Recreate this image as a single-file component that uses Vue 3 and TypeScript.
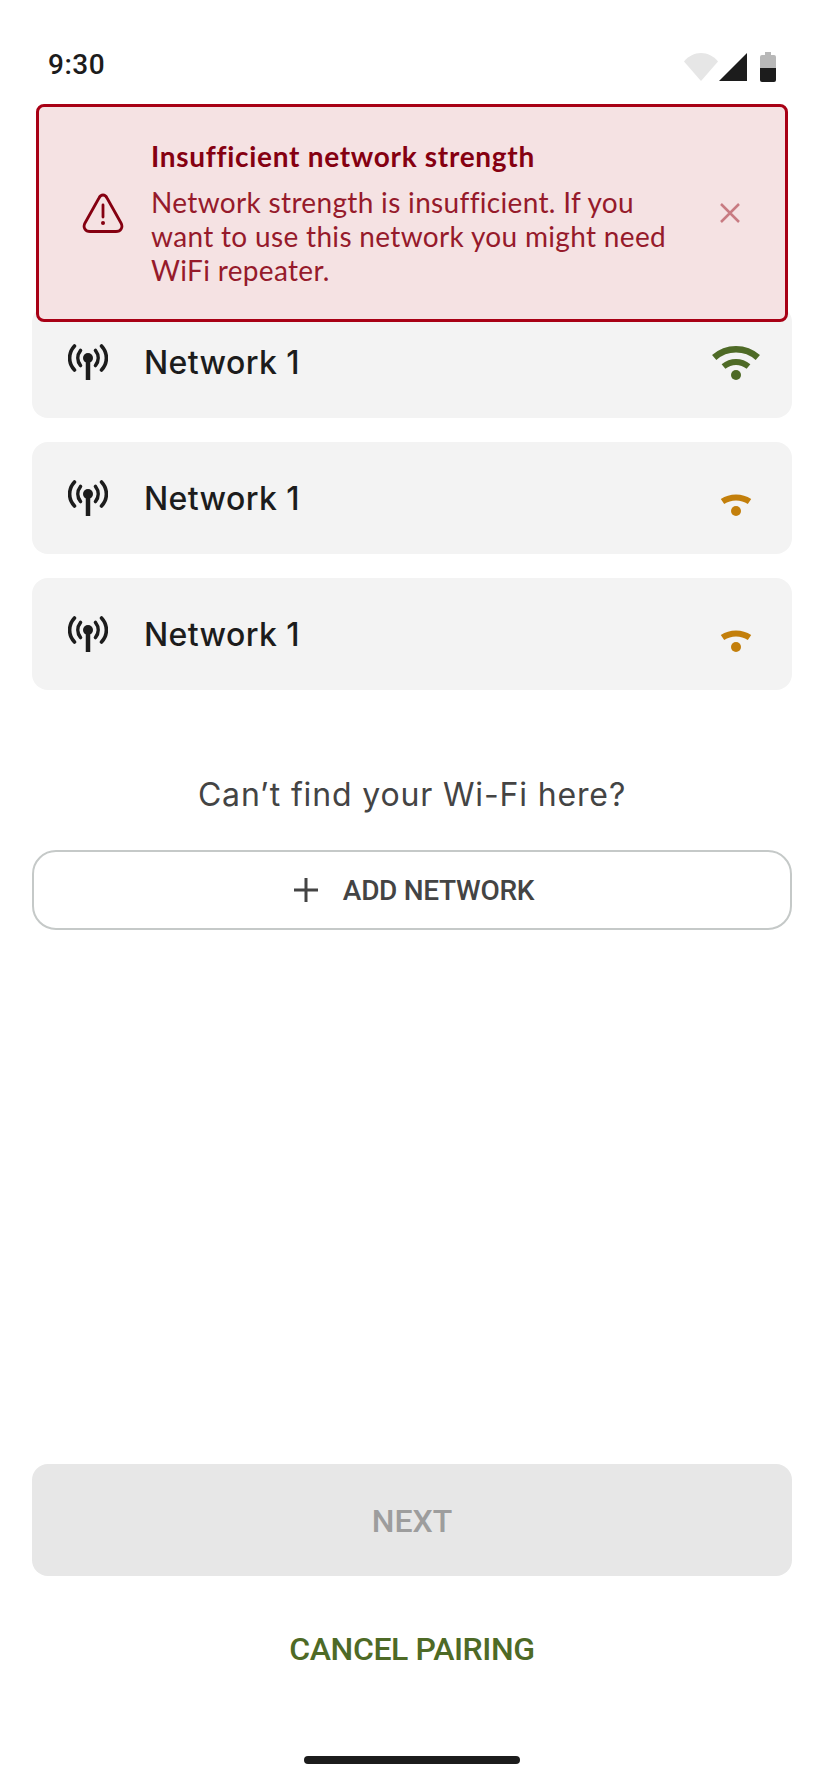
<script setup lang="ts">
interface Network {
  name: string
  strong: boolean
}

const networks: Network[] = [
  { name: 'Network 1', strong: true },
  { name: 'Network 1', strong: false },
  { name: 'Network 1', strong: false }
]
</script>

<template>
  <div class="screen">
    <header class="status-bar">
      <span class="clock">9:30</span>
      <div class="status-icons">
        <svg class="wifi-status" width="34" height="28" viewBox="0 0 34 28">
          <path d="M0 8.500C4.500 3 10.500 0 17 0s12.500 3 17 8.500L17 28z" fill="#e6e6e6" />
        </svg>
        <svg width="28" height="28" viewBox="0 0 28 28">
          <path d="M28 0v28H0z" fill="#1c1c1c" />
        </svg>
        <svg class="battery" width="16" height="30" viewBox="0 0 16 30">
          <path d="M5 0h6v3h3a2 2 0 0 1 2 2v11H0V5a2 2 0 0 1 2-2h3z" fill="#b8b8b8" />
          <path d="M0 16h16v12a2 2 0 0 1-2 2H2a2 2 0 0 1-2-2z" fill="#1c1c1c" />
        </svg>
      </div>
    </header>

    <div class="alert">
      <svg class="alert-icon" width="42" height="40" viewBox="0 0 42 40" fill="none" stroke="#850011" stroke-width="2.800">
        <path d="M17 5 3 30c-2.500 4.500.5 8.500 5 8.500h26c4.500 0 7.500-4 5-8.500L25 5c-2-4-6-4-8 0z" stroke-linejoin="round" />
        <path d="M21 12v12" stroke-linecap="round" />
        <circle cx="21" cy="30" r="2" fill="#850011" stroke="none" />
      </svg>
      <div class="alert-text">
        <div class="alert-title">Insufficient network strength</div>
        <div class="alert-message">Network strength is insufficient. If you want to use this network you might need WiFi repeater.</div>
      </div>
      <svg class="alert-close" width="20" height="20" viewBox="0 0 20 20" stroke="#c87b82" stroke-width="2.500">
        <path d="M1 1l18 18M19 1 1 19" />
      </svg>
    </div>

    <main class="content">
      <div class="network-list">
        <div v-for="(network, i) in networks" :key="i" class="network-row">
          <svg class="antenna" width="40" height="36" viewBox="0 0 40 36" fill="none" stroke="#1c1c1c" stroke-width="3.600" stroke-linecap="round">
            <circle cx="20" cy="14" r="5" fill="#1c1c1c" stroke="none" />
            <path d="M20 14v22" stroke-width="4.500" stroke-linecap="butt" />
            <path d="M12.500 6.500c-3.500 4.500-3.500 10.500 0 15M27.500 6.500c3.500 4.500 3.500 10.500 0 15" />
            <path d="M6.500 2c-6.500 7-6.500 17 0 24M33.500 2c6.500 7 6.500 17 0 24" />
          </svg>
          <span class="network-name">{{ network.name }}</span>
          <svg class="signal" width="48" height="48" viewBox="0 0 48 48" fill="none">
            <template v-if="network.strong">
              <path d="M2.200 19.500c12.500-11 31.100-11 43.600 0" stroke="#4e6a26" stroke-width="6.500" />
              <path d="M11.500 28.500c7.500-6 17.500-6 25 0" stroke="#4e6a26" stroke-width="6" />
              <circle cx="24" cy="37" r="5" fill="#4e6a26" />
            </template>
            <template v-else>
              <path d="M10.500 27.500c8-5.500 19-5.500 27 0" stroke="#c37f0b" stroke-width="6" />
              <circle cx="24" cy="37" r="5" fill="#c37f0b" />
            </template>
          </svg>
        </div>
      </div>

      <p class="hint">Can’t find your Wi-Fi here?</p>
      <button class="add-btn">
        <svg width="24" height="24" viewBox="0 0 24 24" stroke="#444" stroke-width="3">
          <path d="M12 0v24M0 12h24" />
        </svg>
        <span>ADD NETWORK</span>
      </button>
    </main>

    <footer class="actions">
      <button class="next-btn">NEXT</button>
      <button class="cancel-btn">CANCEL PAIRING</button>
      <div class="home-bar"></div>
    </footer>
  </div>
</template>

<style>
body {
  margin: 0;
  background: #fff;
}
</style>

<style scoped>
.screen {
  position: relative;
  width: 824px;
  height: 1784px;
  display: flex;
  flex-direction: column;
  background: #fff;
  font-family: Inter, "Liberation Sans", sans-serif;
  overflow: hidden;
}

.status-bar {
  height: 43px;
  padding: 45px 48px 0 48px;
  display: flex;
  justify-content: space-between;
  align-items: flex-start;
}

.clock {
  font-family: Roboto, sans-serif;
  font-size: 28px;
  font-weight: 500;
  line-height: 40px;
  color: #1c1c1c;
  letter-spacing: 0.5px;
}

.status-icons {
  display: flex;
  align-items: flex-start;
  margin-top: 7px;
}

.wifi-status {
  margin-top: 1px;
  margin-right: 1px;
}

.status-icons svg:nth-child(2) {
  margin-top: 1px;
}

.battery {
  margin-left: 13px;
}

.alert {
  position: absolute;
  top: 104px;
  left: 36px;
  width: 752px;
  height: 218px;
  box-sizing: border-box;
  border: 3px solid #a80015;
  border-radius: 8px;
  background: #f5e2e3;
  display: flex;
  align-items: center;
  padding: 0 45px 0 43px;
}

.alert-icon {
  flex-shrink: 0;
}

.alert-text {
  margin-left: 27px;
  margin-top: -2px;
  flex: 1;
  font-family: Lato, sans-serif;
  color: #961a2b;
}

.alert-title {
  font-size: 28px;
  font-weight: 700;
  line-height: 36px;
  color: #850011;
  letter-spacing: 0.7px;
}

.alert-message {
  margin-top: 11px;
  font-size: 28px;
  line-height: 34px;
  width: 530px;
  letter-spacing: 0.33px;
}

.alert-close {
  flex-shrink: 0;
}

.content {
  flex: 1;
  padding: 218px 32px 0;
  display: flex;
  flex-direction: column;
}

.network-list {
  display: flex;
  flex-direction: column;
  gap: 24px;
}

.network-row {
  height: 112px;
  background: #f3f3f3;
  border-radius: 16px;
  display: flex;
  align-items: center;
  padding: 0 32px 0 36px;
}

.network-name {
  margin-left: 36px;
  flex: 1;
  font-size: 32px;
  font-weight: 450;
  color: #1c1c1c;
  letter-spacing: 0.4px;
}

.signal {
  flex-shrink: 0;
}

.hint {
  margin: 85px 0 0;
  text-align: center;
  font-size: 32px;
  line-height: 40px;
  color: #444;
  letter-spacing: 0.85px;
}

.add-btn {
  margin-top: 35px;
  height: 80px;
  border: 2px solid #c5c9c8;
  border-radius: 24px;
  background: #fff;
  display: flex;
  align-items: center;
  justify-content: center;
  gap: 25px;
  padding: 0 0 0 4px;
  font-family: Roboto, sans-serif;
  font-size: 28px;
  font-weight: 500;
  color: #444;
  letter-spacing: -0.3px;
}

.actions {
  padding: 0 32px 20px;
  display: flex;
  flex-direction: column;
}

.next-btn {
  height: 112px;
  padding: 2px 0 0;
  border: none;
  border-radius: 16px;
  background: #e7e7e7;
  color: #9d9d9d;
  font-family: Roboto, sans-serif;
  font-size: 32px;
  font-weight: 500;
}

.cancel-btn {
  margin-top: 45px;
  height: 56px;
  border: none;
  background: none;
  color: #4e6a26;
  font-family: Roboto, sans-serif;
  font-size: 32px;
  font-weight: 500;
  letter-spacing: -0.4px;
}

.home-bar {
  align-self: center;
  margin-top: 79px;
  width: 216px;
  height: 8px;
  border-radius: 4px;
  background: #1c1c1c;
}
</style>
